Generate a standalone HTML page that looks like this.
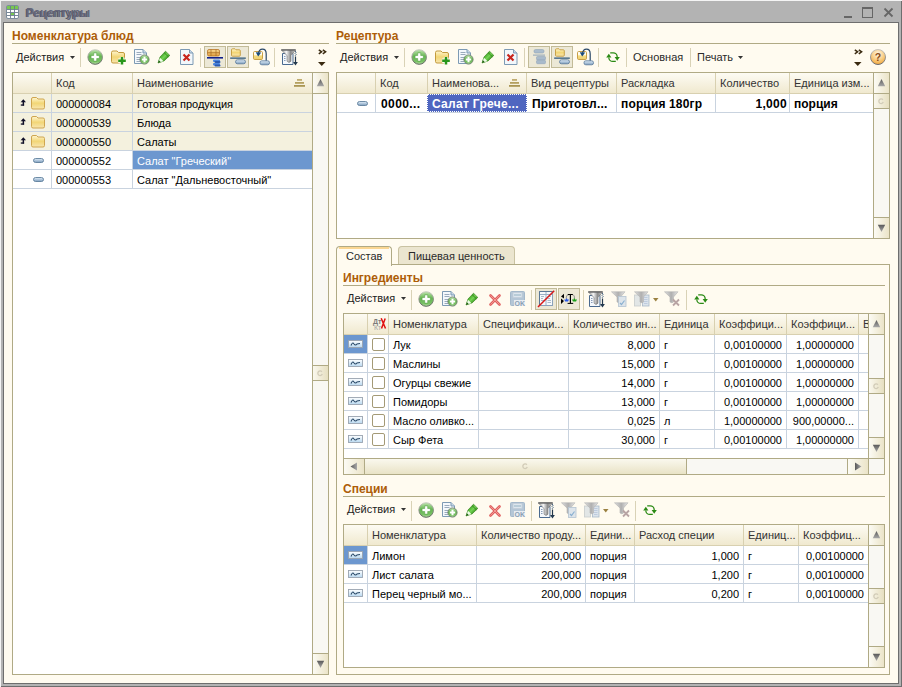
<!DOCTYPE html><html><head><meta charset="utf-8"><style>
html,body{margin:0;padding:0;width:902px;height:687px;overflow:hidden;background:#b3b3b3}
body>div,body>svg{position:absolute}
.t{white-space:nowrap;line-height:20px;font-family:"Liberation Sans",sans-serif}
svg{overflow:visible}
</style></head><body>
<svg width="0" height="0" style="position:absolute"><defs>
<linearGradient id="ghst" x1="0" y1="0" x2="0" y2="1"><stop offset="0" stop-color="#c8c4bc"/><stop offset="1" stop-color="#6a6a70"/></linearGradient>
<linearGradient id="gfold2" x1="0" y1="0" x2="0" y2="1"><stop offset="0" stop-color="#ffffff"/><stop offset="0.4" stop-color="#fffbe8"/><stop offset="0.55" stop-color="#f4dc80"/><stop offset="1" stop-color="#f0d070"/></linearGradient>
<linearGradient id="tri" x1="0" y1="0" x2="0" y2="1"><stop offset="0" stop-color="#5a5a5a"/><stop offset="1" stop-color="#a8a8a8"/></linearGradient>
<linearGradient id="trih" x1="0" y1="0" x2="1" y2="0"><stop offset="0" stop-color="#5a5a5a"/><stop offset="1" stop-color="#a8a8a8"/></linearGradient>
<linearGradient id="gpl" x1="0" y1="0" x2="0" y2="1"><stop offset="0" stop-color="#bfe4ae"/><stop offset="0.45" stop-color="#66b652"/><stop offset="0.8" stop-color="#78c064"/><stop offset="1" stop-color="#b4dca2"/></linearGradient><linearGradient id="gplst" x1="0" y1="0" x2="0" y2="1"><stop offset="0" stop-color="#c8ccc0"/><stop offset="1" stop-color="#5a625a"/></linearGradient>
<linearGradient id="gfold" x1="0" y1="0" x2="0" y2="1"><stop offset="0" stop-color="#fff6d0"/><stop offset="0.5" stop-color="#f2d676"/><stop offset="1" stop-color="#f8e6b0"/></linearGradient>
<linearGradient id="gpen" x1="0" y1="0" x2="1" y2="1"><stop offset="0.2" stop-color="#2e9014"/><stop offset="0.5" stop-color="#74d454"/><stop offset="0.8" stop-color="#22800c"/></linearGradient>
<linearGradient id="gorg" x1="0" y1="0" x2="0" y2="1"><stop offset="0" stop-color="#f8d890"/><stop offset="1" stop-color="#e0a040"/></linearGradient>
<linearGradient id="gbar" x1="0" y1="0" x2="0" y2="1"><stop offset="0" stop-color="#e4f0fa"/><stop offset="1" stop-color="#7c9cbc"/></linearGradient>
<linearGradient id="gfun" x1="0" y1="0" x2="1" y2="0"><stop offset="0" stop-color="#9a9a9a"/><stop offset="0.35" stop-color="#f4f4f4"/><stop offset="0.65" stop-color="#8a8a8a"/><stop offset="1" stop-color="#d0d0d0"/></linearGradient>
<linearGradient id="gfund" x1="0" y1="0" x2="1" y2="0"><stop offset="0" stop-color="#e0e0e0"/><stop offset="0.5" stop-color="#b0b0b0"/><stop offset="1" stop-color="#e8e8e8"/></linearGradient>
<radialGradient id="ghelp" cx="0.5" cy="0.3" r="0.75"><stop offset="0" stop-color="#fff8e8"/><stop offset="0.6" stop-color="#f8c878"/><stop offset="1" stop-color="#f0a030"/></radialGradient>
<linearGradient id="gwave" x1="0" y1="0" x2="0" y2="1"><stop offset="0" stop-color="#ffffff"/><stop offset="1" stop-color="#b8d8f0"/></linearGradient>
</defs></svg>
<div style="left:0px;top:0px;width:902px;height:687px;background:#b3b3b3;"></div>
<div style="left:0px;top:0px;width:902px;height:1px;background:#f4f4f4;"></div>
<div style="left:0px;top:0px;width:1px;height:687px;background:#f4f4f4;"></div>
<div style="left:901px;top:1px;width:1px;height:686px;background:#6e6e6e;"></div>
<div style="left:1px;top:686px;width:901px;height:1px;background:#6e6e6e;"></div>
<div style="left:3px;top:22px;width:896px;height:662px;background:#6e6e6e;"></div>
<div style="left:4px;top:23px;width:894px;height:660px;background:#fffbf0;"></div>
<div class="t" style="left:25px;top:3px;font-size:11.5px;font-weight:bold;color:#575967;">Рецептуры</div>
<svg style="left:6px;top:5px" width="13" height="14" viewBox="0 0 13 14"><rect x="0.5" y="0.5" width="12" height="13" rx="1.5" fill="#fff" stroke="#7c8c9c" stroke-width="1"/><rect x="1" y="1" width="11" height="3.2" fill="#78c850"/><path d="M4.5 1V13M8.5 1V13M1 4.5H12M1 7.5H12M1 10.5H12" stroke="#6a7a8c" stroke-width="0.9"/><rect x="5" y="8" width="3" height="2" fill="#78c850"/></svg>
<div class="t" style="left:26px;top:3px;font-size:12px;font-weight:bold;color:#65677a;letter-spacing:-0.2px">Рецептуры</div>
<div style="left:844px;top:16px;width:8px;height:2px;background:#666;"></div>
<div style="left:862px;top:7px;width:11px;height:11px;background:transparent;box-sizing:border-box;border:1px solid #666;border-top-width:2px"></div>
<svg style="left:883px;top:7px" width="11" height="11" viewBox="0 0 11 11"><path d="M1.5 1.5L9.5 9.5M9.5 1.5L1.5 9.5" stroke="#666" stroke-width="1.8"/></svg>
<div class="t" style="left:12px;top:26px;font-size:12px;font-weight:bold;color:#ad5d08;">Номенклатура блюд</div>
<div style="left:12px;top:43px;width:317px;height:1px;background:#b0aa85;"></div>
<div class="t" style="left:16px;top:47px;font-size:11px;font-weight:normal;color:#222;">Действия</div>
<svg style="left:70px;top:56px" width="5" height="3" viewBox="0 0 5 3"><path d="M0 0H5L2.5 3Z" fill="#333"/></svg>
<div style="left:80px;top:48px;width:1px;height:19px;background:#d9d2b6;"></div>
<svg style="left:87px;top:49px" width="16" height="16" viewBox="0 0 16 16"><circle cx="8.2" cy="8" r="7.3" fill="url(#gpl)" stroke="url(#gplst)" stroke-width="1"/><path d="M6.7 3.9H9.7V6.5H12.3V9.5H9.7V12.1H6.7V9.5H4.1V6.5H6.7Z" fill="#fff" stroke="#4a9a38" stroke-width="0.5"/></svg>
<svg style="left:110px;top:49px" width="17" height="17" viewBox="0 0 17 17"><path d="M1.5 3.5 Q1.5 2 3 2 H7 L8.5 3.5 H13 Q14.5 3.5 14.5 5 V12.5 Q14.5 14 13 14 H3 Q1.5 14 1.5 12.5Z" fill="url(#gfold)" stroke="#c39a3c" stroke-width="1"/><path d="M8.2 11.7H15.8M12 7.9V15.5" stroke="#fffbf0" stroke-width="4.4"/><path d="M8.2 11.7H15.8M12 7.9V15.5" stroke="#28961a" stroke-width="2.5"/></svg>
<svg style="left:134px;top:49px" width="17" height="17" viewBox="0 0 17 17"><path d="M0.5 0.5H9L12.5 4V14.5H0.5Z" fill="#f4f8fc" stroke="#7d9ab4"/><path d="M9 0.5V4H12.5" fill="#c8d8e8" stroke="#7d9ab4"/><path d="M2.5 3.5H7.5M2.5 5.5H7.5M2.5 8.5H7M2.5 10.5H6M2.5 12.5H6" stroke="#9aaabc" stroke-width="1"/><circle cx="10.5" cy="10.5" r="4.6" fill="url(#gpl)" stroke="#6f7f6c" stroke-width="0.9"/><path d="M7.8 10.5H13.2M10.5 7.8V13.2" stroke="#fff" stroke-width="2"/></svg>
<svg style="left:155px;top:47px" width="16" height="16" viewBox="0 0 16 16"><path d="M3 16 L5 10 L10.5 4.2 L14.8 8.4 L9 14Z" fill="url(#gpen)" stroke="#2a7a12" stroke-width="0.6"/><path d="M9.1 5.6L13.4 9.8" stroke="#2a7a12" stroke-width="0.8"/><path d="M3.4 15.6 L5 10.8 L8.6 14.2Z" fill="#eefde8"/><path d="M3 16 L3.9 13.3 L5.7 15.1Z" fill="#1c5a0c"/></svg>
<svg style="left:180px;top:49px" width="14" height="17" viewBox="0 0 14 17"><path d="M0.5 0.5H9.5L13 4V15.5H0.5Z" fill="#f2f7fb" stroke="#7d9ab4"/><path d="M9.5 0.5V4H13" fill="#c8d8e8" stroke="#7d9ab4"/><path d="M3.5 5.5L9.5 11.5M9.5 5.5L3.5 11.5" stroke="#c8241c" stroke-width="2.2"/></svg>
<div style="left:200px;top:48px;width:1px;height:19px;background:#d9d2b6;"></div>
<div style="left:204px;top:46px;width:22px;height:22px;background:#ece8d6;box-sizing:border-box;border:1px solid #c2bb98"></div>
<svg style="left:207px;top:49px" width="17" height="18" viewBox="0 0 17 18"><rect x="0.5" y="0.5" width="12" height="6.5" rx="1.5" fill="url(#gorg)" stroke="#b8762a" stroke-width="0.8"/><path d="M4 0.5V7M9 0.5V7M0.5 3.7H12.5" stroke="#a86a20" stroke-width="0.7"/><rect x="0" y="8" width="16" height="1.6" fill="#10208a"/><rect x="6" y="10.5" width="7" height="2.4" rx="1" fill="#4a86e0"/><rect x="7.5" y="12" width="6" height="2" rx="1" fill="#2a5ab0"/><rect x="6" y="14" width="7" height="2.4" rx="1" fill="#4a86e0"/><rect x="7.5" y="15.5" width="6" height="2" rx="1" fill="#2a5ab0"/></svg>
<div style="left:227px;top:46px;width:22px;height:22px;background:#ece8d6;box-sizing:border-box;border:1px solid #c2bb98"></div>
<svg style="left:230px;top:48px" width="17" height="18" viewBox="0 0 17 18"><path d="M1.5 1.8 Q1.5 0.8 2.5 0.8H5L6 1.8H9.3Q10.3 1.8 10.3 2.8V7.2Q10.3 8.2 9.3 8.2H2.5Q1.5 8.2 1.5 7.2Z" fill="url(#gfold)" stroke="#c39a3c" stroke-width="0.9"/><rect x="0" y="9.4" width="16" height="1.3" rx="0.6" fill="#2a5478"/><rect x="5.5" y="11.8" width="10" height="4" rx="2" fill="url(#gbar)" stroke="#58789a" stroke-width="0.8"/></svg>
<svg style="left:252px;top:48px" width="17" height="17" viewBox="0 0 17 17"><rect x="1.5" y="3.5" width="9" height="8" rx="1.2" fill="url(#gfold2)" stroke="#c9a048" stroke-width="1"/><path d="M6.5 5.5 Q7 1.2 10.5 1.2 Q14.2 1.2 14.2 6 V13.5" fill="none" stroke="#2a4868" stroke-width="1.2"/><path d="M3.8 4.2 L9.2 4.6 L6.2 8.4Z" fill="#1a4a7a"/><rect x="8" y="12.8" width="9.5" height="4" rx="1.8" fill="url(#gbar)" stroke="#58789a" stroke-width="0.8"/></svg>
<div style="left:274px;top:48px;width:1px;height:19px;background:#d9d2b6;"></div>
<svg style="left:281px;top:48px" width="17" height="18" viewBox="0 0 17 18"><path d="M1.5 5.5H12V16.5H1.5Z" fill="#f4f8fc" stroke="#4a6a90" stroke-width="1"/><path d="M3 8.5H4.5M3 10.5H4.5M3 12.5H4.5" stroke="#8a9cb8"/><path d="M0.3 2H14.7L9.9 7.6V13.2Q8 15.6 6.1 13.2V7.6Z" fill="url(#gfun)" stroke="#7a7a7a" stroke-width="0.7"/><path d="M0.3 1.9H14.7" stroke="#5a5a5a" stroke-width="1.2"/><path d="M14.5 8.5V15" stroke="#22384e" stroke-width="1.2"/><path d="M12.1 14H16.9L14.5 17.6Z" fill="#22384e"/><path d="M14 3L15.2 4.2L14 5.4L15.2 6.6L14 7.8" stroke="#3a5878" stroke-width="0.9" fill="none"/></svg>
<svg style="left:318px;top:49px" width="10" height="18" viewBox="0 0 10 18"><path d="M0.8 0.8L3.6 2.8L0.8 4.8M4.8 0.8L7.6 2.8L4.8 4.8" fill="none" stroke="#3a2a10" stroke-width="1.5"/><path d="M0 13H7.5L3.75 17Z" fill="#3a2a10"/></svg>
<div style="left:12px;top:72px;width:317px;height:603px;background:#b0aa85;"></div>
<div style="left:13px;top:73px;width:315px;height:601px;background:#fff;"></div>
<div style="left:13px;top:73px;width:315px;height:20px;background:linear-gradient(#fdfbf3,#f0e9cf);"></div>
<div style="left:13px;top:93px;width:315px;height:1px;background:#d8d0b0;"></div>
<div style="left:13px;top:94px;width:299px;height:18px;background:#f4f1de;"></div>
<div style="left:13px;top:113px;width:299px;height:18px;background:#f4f1de;"></div>
<div style="left:13px;top:132px;width:299px;height:18px;background:#f4f1de;"></div>
<div style="left:133px;top:151px;width:179px;height:18px;background:#6c97cf;"></div>
<div style="left:51px;top:73px;width:1px;height:20px;background:#d8d0b0;"></div>
<div style="left:51px;top:94px;width:1px;height:95px;background:#c9d3df;"></div>
<div style="left:132px;top:73px;width:1px;height:20px;background:#d8d0b0;"></div>
<div style="left:132px;top:94px;width:1px;height:95px;background:#c9d3df;"></div>
<div style="left:13px;top:112px;width:299px;height:1px;background:#c9d3df;"></div>
<div style="left:13px;top:131px;width:299px;height:1px;background:#c9d3df;"></div>
<div style="left:13px;top:150px;width:299px;height:1px;background:#c9d3df;"></div>
<div style="left:13px;top:169px;width:299px;height:1px;background:#c9d3df;"></div>
<div style="left:13px;top:188px;width:299px;height:1px;background:#c9d3df;"></div>
<div class="t" style="left:56px;top:73px;font-size:11px;font-weight:normal;color:#333;">Код</div>
<div class="t" style="left:137px;top:73px;font-size:11px;font-weight:normal;color:#333;">Наименование</div>
<svg style="left:294px;top:78px" width="13" height="9" viewBox="0 0 13 9"><rect x="3" y="1" width="5" height="1.8" fill="#c0ac70"/><rect x="1" y="4" width="9" height="1.8" fill="#b4a060"/><rect x="0" y="7" width="11" height="1.8" fill="#aa9654"/></svg>
<div class="t" style="left:56px;top:94px;font-size:11px;font-weight:normal;color:#000;">000000084</div>
<div class="t" style="left:137px;top:94px;font-size:11px;font-weight:normal;color:#000;">Готовая продукция</div>
<svg style="left:20px;top:99px" width="7" height="7" viewBox="0 0 7 7"><path d="M0.6 3.2 L3.3 0.2 L6 3.2Z" fill="#101028"/><rect x="2.6" y="2.6" width="1.5" height="4" fill="#101028"/><rect x="0.8" y="5.4" width="3.3" height="1.3" fill="#101028"/></svg>
<svg style="left:31px;top:97px" width="14" height="13" viewBox="0 0 14 13"><path d="M0.5 2 Q0.5 0.5 2 0.5H5.5L7 2H12Q13.5 2 13.5 3.5V10.5Q13.5 12 12 12H2Q0.5 12 0.5 10.5Z" fill="url(#gfold)" stroke="#cfa650" stroke-width="1"/></svg>
<div class="t" style="left:56px;top:113px;font-size:11px;font-weight:normal;color:#000;">000000539</div>
<div class="t" style="left:137px;top:113px;font-size:11px;font-weight:normal;color:#000;">Блюда</div>
<svg style="left:20px;top:118px" width="7" height="7" viewBox="0 0 7 7"><path d="M0.6 3.2 L3.3 0.2 L6 3.2Z" fill="#101028"/><rect x="2.6" y="2.6" width="1.5" height="4" fill="#101028"/><rect x="0.8" y="5.4" width="3.3" height="1.3" fill="#101028"/></svg>
<svg style="left:31px;top:116px" width="14" height="13" viewBox="0 0 14 13"><path d="M0.5 2 Q0.5 0.5 2 0.5H5.5L7 2H12Q13.5 2 13.5 3.5V10.5Q13.5 12 12 12H2Q0.5 12 0.5 10.5Z" fill="url(#gfold)" stroke="#cfa650" stroke-width="1"/></svg>
<div class="t" style="left:56px;top:132px;font-size:11px;font-weight:normal;color:#000;">000000550</div>
<div class="t" style="left:137px;top:132px;font-size:11px;font-weight:normal;color:#000;">Салаты</div>
<svg style="left:20px;top:137px" width="7" height="7" viewBox="0 0 7 7"><path d="M0.6 3.2 L3.3 0.2 L6 3.2Z" fill="#101028"/><rect x="2.6" y="2.6" width="1.5" height="4" fill="#101028"/><rect x="0.8" y="5.4" width="3.3" height="1.3" fill="#101028"/></svg>
<svg style="left:31px;top:135px" width="14" height="13" viewBox="0 0 14 13"><path d="M0.5 2 Q0.5 0.5 2 0.5H5.5L7 2H12Q13.5 2 13.5 3.5V10.5Q13.5 12 12 12H2Q0.5 12 0.5 10.5Z" fill="url(#gfold)" stroke="#cfa650" stroke-width="1"/></svg>
<div class="t" style="left:56px;top:151px;font-size:11px;font-weight:normal;color:#000;">000000552</div>
<div class="t" style="left:137px;top:151px;font-size:11px;font-weight:normal;color:#fff;">Салат "Греческий"</div>
<svg style="left:33px;top:158px" width="11" height="5" viewBox="0 0 11 5"><rect x="0.5" y="0.5" width="10" height="4" rx="2" fill="url(#gbar)" stroke="#5f7f9c" stroke-width="0.9"/></svg>
<div class="t" style="left:56px;top:170px;font-size:11px;font-weight:normal;color:#000;">000000553</div>
<div class="t" style="left:137px;top:170px;font-size:11px;font-weight:normal;color:#000;">Салат "Дальневосточный"</div>
<svg style="left:33px;top:177px" width="11" height="5" viewBox="0 0 11 5"><rect x="0.5" y="0.5" width="10" height="4" rx="2" fill="url(#gbar)" stroke="#5f7f9c" stroke-width="0.9"/></svg>
<div style="left:313px;top:73px;width:15px;height:601px;background:#f9f8f3;"></div>
<div style="left:312px;top:72px;width:1px;height:603px;background:#b0aa85;"></div>
<div style="left:313px;top:73px;width:15px;height:20px;background:linear-gradient(90deg,#fcfbf4,#ebe4c8);"></div>
<svg style="left:313px;top:73px" width="15" height="20" viewBox="0 0 15 20"><path d="M3.8 13.2L7.5 6.0L11.2 13.2Z" fill="url(#tri)"/></svg>
<div style="left:312px;top:93px;width:17px;height:1px;background:#b0aa85;"></div>
<div style="left:313px;top:654px;width:15px;height:20px;background:linear-gradient(90deg,#fcfbf4,#ebe4c8);"></div>
<svg style="left:313px;top:654px" width="15" height="20" viewBox="0 0 15 20"><path d="M3.8 6.8L7.5 14.0L11.2 6.8Z" fill="url(#tri)"/></svg>
<div style="left:312px;top:653px;width:17px;height:1px;background:#b0aa85;"></div>
<div style="left:313px;top:366px;width:15px;height:14px;background:linear-gradient(90deg,#faf8ee,#e6dfc0);"></div>
<svg style="left:316px;top:369px" width="8" height="8" viewBox="0 0 8 8"><path d="M5.9 2.7 A2.3 2.3 0 1 0 6.3 5.1" fill="none" stroke="#d2ccb8" stroke-width="1.3"/></svg>
<div style="left:312px;top:365px;width:17px;height:1px;background:#b0aa85;"></div>
<div style="left:312px;top:380px;width:17px;height:1px;background:#b0aa85;"></div>
<div class="t" style="left:336px;top:26px;font-size:12px;font-weight:bold;color:#ad5d08;">Рецептура</div>
<div style="left:336px;top:43px;width:554px;height:1px;background:#b0aa85;"></div>
<div class="t" style="left:340px;top:47px;font-size:11px;font-weight:normal;color:#222;">Действия</div>
<svg style="left:394px;top:56px" width="5" height="3" viewBox="0 0 5 3"><path d="M0 0H5L2.5 3Z" fill="#333"/></svg>
<div style="left:404px;top:48px;width:1px;height:19px;background:#d9d2b6;"></div>
<svg style="left:411px;top:49px" width="16" height="16" viewBox="0 0 16 16"><circle cx="8.2" cy="8" r="7.3" fill="url(#gpl)" stroke="url(#gplst)" stroke-width="1"/><path d="M6.7 3.9H9.7V6.5H12.3V9.5H9.7V12.1H6.7V9.5H4.1V6.5H6.7Z" fill="#fff" stroke="#4a9a38" stroke-width="0.5"/></svg>
<svg style="left:434px;top:49px" width="17" height="17" viewBox="0 0 17 17"><path d="M1.5 3.5 Q1.5 2 3 2 H7 L8.5 3.5 H13 Q14.5 3.5 14.5 5 V12.5 Q14.5 14 13 14 H3 Q1.5 14 1.5 12.5Z" fill="url(#gfold)" stroke="#c39a3c" stroke-width="1"/><path d="M8.2 11.7H15.8M12 7.9V15.5" stroke="#fffbf0" stroke-width="4.4"/><path d="M8.2 11.7H15.8M12 7.9V15.5" stroke="#28961a" stroke-width="2.5"/></svg>
<svg style="left:458px;top:49px" width="17" height="17" viewBox="0 0 17 17"><path d="M0.5 0.5H9L12.5 4V14.5H0.5Z" fill="#f4f8fc" stroke="#7d9ab4"/><path d="M9 0.5V4H12.5" fill="#c8d8e8" stroke="#7d9ab4"/><path d="M2.5 3.5H7.5M2.5 5.5H7.5M2.5 8.5H7M2.5 10.5H6M2.5 12.5H6" stroke="#9aaabc" stroke-width="1"/><circle cx="10.5" cy="10.5" r="4.6" fill="url(#gpl)" stroke="#6f7f6c" stroke-width="0.9"/><path d="M7.8 10.5H13.2M10.5 7.8V13.2" stroke="#fff" stroke-width="2"/></svg>
<svg style="left:479px;top:47px" width="16" height="16" viewBox="0 0 16 16"><path d="M3 16 L5 10 L10.5 4.2 L14.8 8.4 L9 14Z" fill="url(#gpen)" stroke="#2a7a12" stroke-width="0.6"/><path d="M9.1 5.6L13.4 9.8" stroke="#2a7a12" stroke-width="0.8"/><path d="M3.4 15.6 L5 10.8 L8.6 14.2Z" fill="#eefde8"/><path d="M3 16 L3.9 13.3 L5.7 15.1Z" fill="#1c5a0c"/></svg>
<svg style="left:504px;top:49px" width="14" height="17" viewBox="0 0 14 17"><path d="M0.5 0.5H9.5L13 4V15.5H0.5Z" fill="#f2f7fb" stroke="#7d9ab4"/><path d="M9.5 0.5V4H13" fill="#c8d8e8" stroke="#7d9ab4"/><path d="M3.5 5.5L9.5 11.5M9.5 5.5L3.5 11.5" stroke="#c8241c" stroke-width="2.2"/></svg>
<div style="left:524px;top:48px;width:1px;height:19px;background:#d9d2b6;"></div>
<div style="left:528px;top:46px;width:22px;height:22px;background:#ece8d6;box-sizing:border-box;border:1px solid #c2bb98"></div>
<svg style="left:529px;top:49px" width="17" height="18" viewBox="0 0 17 18"><rect x="5" y="0.5" width="10" height="3.5" rx="1.5" fill="#aabccc" stroke="#90a4b8" stroke-width="0.6"/><rect x="4" y="5.6" width="12" height="1" fill="#8ea4b8"/><rect x="7.5" y="7.5" width="9" height="3.4" rx="1" fill="#a8bacb" stroke="#90a4b8" stroke-width="0.6"/><rect x="7.5" y="11.3" width="9" height="3.4" rx="1" fill="#a8bacb" stroke="#90a4b8" stroke-width="0.6"/></svg>
<div style="left:551px;top:46px;width:22px;height:22px;background:#ece8d6;box-sizing:border-box;border:1px solid #c2bb98"></div>
<svg style="left:554px;top:48px" width="17" height="18" viewBox="0 0 17 18"><path d="M1.5 1.8 Q1.5 0.8 2.5 0.8H5L6 1.8H9.3Q10.3 1.8 10.3 2.8V7.2Q10.3 8.2 9.3 8.2H2.5Q1.5 8.2 1.5 7.2Z" fill="url(#gfold)" stroke="#c39a3c" stroke-width="0.9"/><rect x="0" y="9.4" width="16" height="1.3" rx="0.6" fill="#2a5478"/><rect x="5.5" y="11.8" width="10" height="4" rx="2" fill="url(#gbar)" stroke="#58789a" stroke-width="0.8"/></svg>
<svg style="left:576px;top:48px" width="17" height="17" viewBox="0 0 17 17"><rect x="1.5" y="3.5" width="9" height="8" rx="1.2" fill="url(#gfold2)" stroke="#c9a048" stroke-width="1"/><path d="M6.5 5.5 Q7 1.2 10.5 1.2 Q14.2 1.2 14.2 6 V13.5" fill="none" stroke="#2a4868" stroke-width="1.2"/><path d="M3.8 4.2 L9.2 4.6 L6.2 8.4Z" fill="#1a4a7a"/><rect x="8" y="12.8" width="9.5" height="4" rx="1.8" fill="url(#gbar)" stroke="#58789a" stroke-width="0.8"/></svg>
<div style="left:598px;top:48px;width:1px;height:19px;background:#d9d2b6;"></div>
<svg style="left:606px;top:52px" width="15" height="11" viewBox="0 0 15 11"><path d="M4.2 0.9 H7.2 A4 4 0 0 1 11.2 4.9" fill="none" stroke="#2a8a14" stroke-width="1.3"/><path d="M8.6 5H13.8L11.2 8.8Z" fill="#2a8a14"/><path d="M9.8 9.4 H6.8 A4 4 0 0 1 2.8 5.4" fill="none" stroke="#2a8a14" stroke-width="1.3"/><path d="M0.2 5.4H5.4L2.8 1.8Z" fill="#2a8a14"/></svg>
<div style="left:626px;top:48px;width:1px;height:19px;background:#d9d2b6;"></div>
<div class="t" style="left:633px;top:47px;font-size:11px;font-weight:normal;color:#2a2a2a;">Основная</div>
<div style="left:690px;top:48px;width:1px;height:19px;background:#d9d2b6;"></div>
<div class="t" style="left:697px;top:47px;font-size:11px;font-weight:normal;color:#2a2a2a;">Печать</div>
<svg style="left:738px;top:56px" width="5" height="3" viewBox="0 0 5 3"><path d="M0 0H5L2.5 3Z" fill="#333"/></svg>
<svg style="left:854px;top:49px" width="10" height="18" viewBox="0 0 10 18"><path d="M0.8 0.8L3.6 2.8L0.8 4.8M4.8 0.8L7.6 2.8L4.8 4.8" fill="none" stroke="#3a2a10" stroke-width="1.5"/><path d="M0 13H7.5L3.75 17Z" fill="#3a2a10"/></svg>
<svg style="left:869px;top:48px" width="18" height="18" viewBox="0 0 18 18"><circle cx="9" cy="9" r="7.5" fill="url(#ghelp)" stroke="url(#ghst)" stroke-width="1"/><text x="9" y="12.8" text-anchor="middle" font-family="Liberation Sans" font-weight="bold" font-size="10.5" fill="#8a4c18">?</text></svg>
<div style="left:336px;top:72px;width:554px;height:167px;background:#b0aa85;"></div>
<div style="left:337px;top:73px;width:552px;height:165px;background:#fff;"></div>
<div style="left:337px;top:73px;width:552px;height:20px;background:linear-gradient(#fdfbf3,#f0e9cf);"></div>
<div style="left:337px;top:93px;width:552px;height:1px;background:#d8d0b0;"></div>
<div style="left:375px;top:73px;width:1px;height:20px;background:#d8d0b0;"></div>
<div style="left:375px;top:94px;width:1px;height:18px;background:#c9d3df;"></div>
<div style="left:427px;top:73px;width:1px;height:20px;background:#d8d0b0;"></div>
<div style="left:427px;top:94px;width:1px;height:18px;background:#c9d3df;"></div>
<div style="left:526px;top:73px;width:1px;height:20px;background:#d8d0b0;"></div>
<div style="left:526px;top:94px;width:1px;height:18px;background:#c9d3df;"></div>
<div style="left:616px;top:73px;width:1px;height:20px;background:#d8d0b0;"></div>
<div style="left:616px;top:94px;width:1px;height:18px;background:#c9d3df;"></div>
<div style="left:715px;top:73px;width:1px;height:20px;background:#d8d0b0;"></div>
<div style="left:715px;top:94px;width:1px;height:18px;background:#c9d3df;"></div>
<div style="left:789px;top:73px;width:1px;height:20px;background:#d8d0b0;"></div>
<div style="left:789px;top:94px;width:1px;height:18px;background:#c9d3df;"></div>
<div style="left:337px;top:112px;width:536px;height:1px;background:#c9d3df;"></div>
<div class="t" style="left:380px;top:73px;font-size:11px;font-weight:normal;color:#333;">Код</div>
<div class="t" style="left:432px;top:73px;font-size:11px;font-weight:normal;color:#333;">Наименова...</div>
<div class="t" style="left:531px;top:73px;font-size:11px;font-weight:normal;color:#333;">Вид рецептуры</div>
<div class="t" style="left:621px;top:73px;font-size:11px;font-weight:normal;color:#333;">Раскладка</div>
<div class="t" style="left:720px;top:73px;font-size:11px;font-weight:normal;color:#333;">Количество</div>
<div class="t" style="left:794px;top:73px;font-size:11px;font-weight:normal;color:#333;">Единица изм...</div>
<svg style="left:509px;top:78px" width="13" height="9" viewBox="0 0 13 9"><rect x="3" y="1" width="5" height="1.8" fill="#c0ac70"/><rect x="1" y="4" width="9" height="1.8" fill="#b4a060"/><rect x="0" y="7" width="11" height="1.8" fill="#aa9654"/></svg>
<div style="left:427px;top:94px;width:100px;height:18px;background:#4f66c0;box-sizing:border-box;border:1px dotted #fff"></div>
<svg style="left:357px;top:101px" width="11" height="5" viewBox="0 0 11 5"><rect x="0.5" y="0.5" width="10" height="4" rx="2" fill="url(#gbar)" stroke="#5f7f9c" stroke-width="0.9"/></svg>
<div class="t" style="left:381px;top:94px;font-size:12px;font-weight:bold;color:#000;letter-spacing:0.4px">0000...</div>
<div class="t" style="left:432px;top:94px;font-size:12px;font-weight:bold;color:#fff;letter-spacing:0.3px">Салат Грече...</div>
<div class="t" style="left:532px;top:94px;font-size:12px;font-weight:bold;color:#000;letter-spacing:0.2px">Приготовл...</div>
<div class="t" style="left:621px;top:94px;font-size:12px;font-weight:bold;color:#000;letter-spacing:0.15px">порция 180гр</div>
<div class="t" style="left:487px;width:300px;text-align:right;top:94px;font-size:12px;font-weight:bold;color:#000;letter-spacing:0.3px">1,000</div>
<div class="t" style="left:794px;top:94px;font-size:12px;font-weight:bold;color:#000;">порция</div>
<div style="left:874px;top:73px;width:15px;height:165px;background:#f9f8f3;"></div>
<div style="left:873px;top:72px;width:1px;height:167px;background:#b0aa85;"></div>
<div style="left:874px;top:73px;width:15px;height:20px;background:linear-gradient(90deg,#fcfbf4,#ebe4c8);"></div>
<svg style="left:874px;top:73px" width="15" height="20" viewBox="0 0 15 20"><path d="M3.8 13.2L7.5 6.0L11.2 13.2Z" fill="url(#tri)"/></svg>
<div style="left:873px;top:93px;width:17px;height:1px;background:#b0aa85;"></div>
<div style="left:874px;top:218px;width:15px;height:20px;background:linear-gradient(90deg,#fcfbf4,#ebe4c8);"></div>
<svg style="left:874px;top:218px" width="15" height="20" viewBox="0 0 15 20"><path d="M3.8 6.8L7.5 14.0L11.2 6.8Z" fill="url(#tri)"/></svg>
<div style="left:873px;top:217px;width:17px;height:1px;background:#b0aa85;"></div>
<div style="left:874px;top:94px;width:15px;height:14px;background:linear-gradient(90deg,#faf8ee,#e6dfc0);"></div>
<svg style="left:877px;top:97px" width="8" height="8" viewBox="0 0 8 8"><path d="M5.9 2.7 A2.3 2.3 0 1 0 6.3 5.1" fill="none" stroke="#d2ccb8" stroke-width="1.3"/></svg>
<div style="left:873px;top:93px;width:17px;height:1px;background:#b0aa85;"></div>
<div style="left:873px;top:108px;width:17px;height:1px;background:#b0aa85;"></div>
<div style="left:336px;top:264px;width:554px;height:411px;background:#b0aa85;"></div>
<div style="left:337px;top:265px;width:552px;height:409px;background:#fffbf0;"></div>
<div style="left:398px;top:246px;width:117px;height:19px;box-sizing:border-box;border:1px solid #c9c2a2;border-bottom:none;border-radius:4px 4px 0 0;background:#ebe5cf"></div>
<div style="left:398px;top:264px;width:117px;height:1px;background:#b0aa85;"></div>
<div style="left:336px;top:246px;width:56px;height:20px;box-sizing:border-box;border:1px solid #b0aa85;border-bottom:none;border-radius:4px 4px 0 0;background:#fffbf0"></div>
<div style="left:339px;top:247px;width:50px;height:2px;background:#fad692;"></div>
<div class="t" style="left:346px;top:246px;font-size:11px;font-weight:normal;color:#2a2a2a;">Состав</div>
<div class="t" style="left:408px;top:246px;font-size:11px;font-weight:normal;color:#2a2a2a;">Пищевая ценность</div>
<div class="t" style="left:343px;top:268px;font-size:12px;font-weight:bold;color:#ad5d08;">Ингредиенты</div>
<div style="left:343px;top:285px;width:542px;height:1px;background:#b0aa85;"></div>
<div class="t" style="left:347px;top:288px;font-size:11px;font-weight:normal;color:#222;">Действия</div>
<svg style="left:401px;top:297px" width="5" height="3" viewBox="0 0 5 3"><path d="M0 0H5L2.5 3Z" fill="#333"/></svg>
<div style="left:411px;top:290px;width:1px;height:20px;background:#d9d2b6;"></div>
<svg style="left:418px;top:291px" width="16" height="16" viewBox="0 0 16 16"><circle cx="8.2" cy="8" r="7.3" fill="url(#gpl)" stroke="url(#gplst)" stroke-width="1"/><path d="M6.7 3.9H9.7V6.5H12.3V9.5H9.7V12.1H6.7V9.5H4.1V6.5H6.7Z" fill="#fff" stroke="#4a9a38" stroke-width="0.5"/></svg>
<svg style="left:442px;top:291px" width="17" height="17" viewBox="0 0 17 17"><path d="M0.5 0.5H9L12.5 4V14.5H0.5Z" fill="#f4f8fc" stroke="#7d9ab4"/><path d="M9 0.5V4H12.5" fill="#c8d8e8" stroke="#7d9ab4"/><path d="M2.5 3.5H7.5M2.5 5.5H7.5M2.5 8.5H7M2.5 10.5H6M2.5 12.5H6" stroke="#9aaabc" stroke-width="1"/><circle cx="10.5" cy="10.5" r="4.6" fill="url(#gpl)" stroke="#6f7f6c" stroke-width="0.9"/><path d="M7.8 10.5H13.2M10.5 7.8V13.2" stroke="#fff" stroke-width="2"/></svg>
<svg style="left:463px;top:289px" width="16" height="16" viewBox="0 0 16 16"><path d="M3 16 L5 10 L10.5 4.2 L14.8 8.4 L9 14Z" fill="url(#gpen)" stroke="#2a7a12" stroke-width="0.6"/><path d="M9.1 5.6L13.4 9.8" stroke="#2a7a12" stroke-width="0.8"/><path d="M3.4 15.6 L5 10.8 L8.6 14.2Z" fill="#eefde8"/><path d="M3 16 L3.9 13.3 L5.7 15.1Z" fill="#1c5a0c"/></svg>
<svg style="left:489px;top:294px" width="12" height="12" viewBox="0 0 12 12"><path d="M1.5 1.5L10.5 10.5M10.5 1.5L1.5 10.5" stroke="#e06060" stroke-width="2.6" stroke-linecap="round"/><path d="M1.5 1.5L10.5 10.5M10.5 1.5L1.5 10.5" stroke="#f4a8a0" stroke-width="0.8"/></svg>
<svg style="left:510px;top:291px" width="16" height="16" viewBox="0 0 16 16"><rect x="0.5" y="0.5" width="14" height="14" rx="1" fill="#b4c6d6" stroke="#a4b8ca"/><rect x="3" y="1.5" width="9" height="5" fill="#dde6ee" stroke="#c0ccd8" stroke-width="0.8"/><rect x="4" y="3" width="7" height="2" fill="#b8ccd8"/><rect x="4" y="9" width="11" height="6" fill="#e8edf2"/><text x="4.6" y="15" font-family="Liberation Sans" font-weight="bold" font-size="7" fill="#8aa0b4">OK</text></svg>
<div style="left:531px;top:290px;width:1px;height:20px;background:#d9d2b6;"></div>
<div style="left:535px;top:288px;width:22px;height:22px;background:#ece8d6;box-sizing:border-box;border:1px solid #c2bb98"></div>
<svg style="left:537px;top:290px" width="18" height="18" viewBox="0 0 18 18"><rect x="2.5" y="1.5" width="13" height="14" fill="#f6f9fc" stroke="#8aa2ba" stroke-width="1"/><path d="M2.5 15.5V1.5H15.5" fill="none" stroke="#5a7896" stroke-width="1"/><path d="M3 4.5H15M9 2V15" stroke="#9ab0c6" stroke-width="1"/><path d="M4 6.5H7M4 8.5H6M4 10.5H7M10.5 6.5H14M10.5 8.5H13M10.5 10.5H14M10.5 12.5H14" stroke="#a0b2c4" stroke-width="0.9"/><path d="M1 17 L17.2 0.8" stroke="#d81818" stroke-width="1.5"/></svg>
<div style="left:558px;top:288px;width:22px;height:22px;background:#ece8d6;box-sizing:border-box;border:1px solid #c2bb98"></div>
<svg style="left:558px;top:288px" width="22" height="22" viewBox="0 0 22 22"><path d="M6 5.8 L3 8.4 L6 10.6Z M3 10.6 L6 12.9 L3 16Z" fill="#000"/><path d="M8.3 10.8 V9 Q8.3 6.4 12.3 6.4 Q16.4 6.4 16.4 9 V10.8" fill="none" stroke="#8a8a8a" stroke-width="0.9"/><path d="M12.4 6.4V15.4" stroke="#000" stroke-width="1.2"/><path d="M9.8 6.5H14.8M9.6 15.4H15.2" stroke="#000" stroke-width="1"/><path d="M6.2 11.6H11L10 13.6H7.2Z" fill="#2a5ae8"/><path d="M8.6 10.6V12" stroke="#2a5ae8" stroke-width="1.2"/><path d="M13.9 11.6H19L18 13.6H15Z" fill="#18a018"/><path d="M16.4 10.6V12" stroke="#18a018" stroke-width="1.2"/></svg>
<div style="left:583px;top:290px;width:1px;height:20px;background:#d9d2b6;"></div>
<svg style="left:588px;top:290px" width="17" height="18" viewBox="0 0 17 18"><path d="M1.5 5.5H12V16.5H1.5Z" fill="#f4f8fc" stroke="#4a6a90" stroke-width="1"/><path d="M3 8.5H4.5M3 10.5H4.5M3 12.5H4.5" stroke="#8a9cb8"/><path d="M0.3 2H14.7L9.9 7.6V13.2Q8 15.6 6.1 13.2V7.6Z" fill="url(#gfun)" stroke="#7a7a7a" stroke-width="0.7"/><path d="M0.3 1.9H14.7" stroke="#5a5a5a" stroke-width="1.2"/><path d="M14.5 8.5V15" stroke="#22384e" stroke-width="1.2"/><path d="M12.1 14H16.9L14.5 17.6Z" fill="#22384e"/><path d="M14 3L15.2 4.2L14 5.4L15.2 6.6L14 7.8" stroke="#3a5878" stroke-width="0.9" fill="none"/></svg>
<svg style="left:611px;top:291px" width="16" height="17" viewBox="0 0 16 17"><path d="M0.5 0.8H14L9.5 6V11Q8 12.5 6 11V6Z" fill="url(#gfund)" stroke="#b0b0b0" stroke-width="0.6"/><rect x="7.5" y="5.5" width="7.5" height="10" fill="#dde4ea" stroke="#b4c4d2" stroke-width="0.8"/><path d="M9 12L10.5 13.5L13.5 9.5" stroke="#8ab0d0" stroke-width="1.2" fill="none"/></svg>
<svg style="left:634px;top:291px" width="16" height="17" viewBox="0 0 16 17"><rect x="0.5" y="4" width="6" height="11" fill="#e2e6e6" stroke="#c8cccc" stroke-width="0.8"/><rect x="8.5" y="4" width="6.5" height="11" fill="#dce4ec" stroke="#a8b8c8" stroke-width="0.8"/><path d="M10 6.5H13.5M10 8.5H13.5M10 10.5H13.5M10 12.5H13.5" stroke="#b0c0d8" stroke-width="0.7"/><path d="M0.5 0.8H14L9.5 6V11Q8 12.5 6 11V6Z" fill="url(#gfund)" stroke="#b0b0b0" stroke-width="0.6"/></svg>
<svg style="left:653px;top:298px" width="6" height="4" viewBox="0 0 6 4"><path d="M0 0H5.5L2.75 3.5Z" fill="#9a8040"/></svg>
<svg style="left:664px;top:291px" width="17" height="17" viewBox="0 0 17 17"><path d="M0.5 0.8H14L9.5 6V11Q8 12.5 6 11V6Z" fill="url(#gfund)" stroke="#b0b0b0" stroke-width="0.6"/><path d="M9 8.5L15 14.5M15 8.5L9 14.5" stroke="#b8a4a4" stroke-width="1.8"/></svg>
<div style="left:686px;top:290px;width:1px;height:20px;background:#d9d2b6;"></div>
<svg style="left:694px;top:294px" width="15" height="11" viewBox="0 0 15 11"><path d="M4.2 0.9 H7.2 A4 4 0 0 1 11.2 4.9" fill="none" stroke="#2a8a14" stroke-width="1.3"/><path d="M8.6 5H13.8L11.2 8.8Z" fill="#2a8a14"/><path d="M9.8 9.4 H6.8 A4 4 0 0 1 2.8 5.4" fill="none" stroke="#2a8a14" stroke-width="1.3"/><path d="M0.2 5.4H5.4L2.8 1.8Z" fill="#2a8a14"/></svg>
<div style="left:343px;top:313px;width:542px;height:162px;background:#b0aa85;"></div>
<div style="left:344px;top:314px;width:540px;height:160px;background:#fff;"></div>
<div style="left:344px;top:314px;width:540px;height:20px;background:linear-gradient(#fdfbf3,#f0e9cf);"></div>
<div style="left:344px;top:334px;width:540px;height:1px;background:#d8d0b0;"></div>
<div style="left:344px;top:335px;width:23px;height:18px;background:#6c97cf;"></div>
<div style="left:367px;top:314px;width:1px;height:20px;background:#d8d0b0;"></div>
<div style="left:367px;top:335px;width:1px;height:113px;background:#c9d3df;"></div>
<div style="left:388px;top:314px;width:1px;height:20px;background:#d8d0b0;"></div>
<div style="left:388px;top:335px;width:1px;height:113px;background:#c9d3df;"></div>
<div style="left:478px;top:314px;width:1px;height:20px;background:#d8d0b0;"></div>
<div style="left:478px;top:335px;width:1px;height:113px;background:#c9d3df;"></div>
<div style="left:568px;top:314px;width:1px;height:20px;background:#d8d0b0;"></div>
<div style="left:568px;top:335px;width:1px;height:113px;background:#c9d3df;"></div>
<div style="left:659px;top:314px;width:1px;height:20px;background:#d8d0b0;"></div>
<div style="left:659px;top:335px;width:1px;height:113px;background:#c9d3df;"></div>
<div style="left:714px;top:314px;width:1px;height:20px;background:#d8d0b0;"></div>
<div style="left:714px;top:335px;width:1px;height:113px;background:#c9d3df;"></div>
<div style="left:786px;top:314px;width:1px;height:20px;background:#d8d0b0;"></div>
<div style="left:786px;top:335px;width:1px;height:113px;background:#c9d3df;"></div>
<div style="left:858px;top:314px;width:1px;height:20px;background:#d8d0b0;"></div>
<div style="left:858px;top:335px;width:1px;height:113px;background:#c9d3df;"></div>
<div style="left:344px;top:353px;width:524px;height:1px;background:#c9d3df;"></div>
<div style="left:344px;top:372px;width:524px;height:1px;background:#c9d3df;"></div>
<div style="left:344px;top:391px;width:524px;height:1px;background:#c9d3df;"></div>
<div style="left:344px;top:410px;width:524px;height:1px;background:#c9d3df;"></div>
<div style="left:344px;top:429px;width:524px;height:1px;background:#c9d3df;"></div>
<div style="left:344px;top:448px;width:524px;height:1px;background:#c9d3df;"></div>
<div class="t" style="left:393px;top:314px;font-size:11px;font-weight:normal;color:#333;">Номенклатура</div>
<div class="t" style="left:483px;top:314px;font-size:11px;font-weight:normal;color:#333;">Спецификаци...</div>
<div class="t" style="left:573px;top:314px;font-size:11px;font-weight:normal;color:#333;">Количество ин...</div>
<div class="t" style="left:664px;top:314px;font-size:11px;font-weight:normal;color:#333;">Единица</div>
<div class="t" style="left:719px;top:314px;font-size:11px;font-weight:normal;color:#333;">Коэффици...</div>
<div class="t" style="left:791px;top:314px;font-size:11px;font-weight:normal;color:#333;">Коэффици...</div>
<div class="t" style="left:863px;top:314px;font-size:11px;font-weight:normal;color:#333;">В</div>
<svg style="left:373px;top:317px" width="14" height="14" viewBox="0 0 14 14"><text x="0" y="6.5" font-family="Liberation Sans" font-weight="bold" font-size="7" fill="#7a7a7a">Дт</text><text x="1" y="12.5" font-family="Liberation Sans" font-size="7" fill="#a8a8a8">Кт</text><path d="M8.2 1.2 L12.5 11.5 M12.2 1.5 L8.5 11.5" stroke="#e01010" stroke-width="1.5"/></svg>
<div class="t" style="left:393px;top:335px;font-size:11px;font-weight:normal;color:#000;">Лук</div>
<div class="t" style="left:355px;width:300px;text-align:right;top:335px;font-size:11px;font-weight:normal;color:#000;">8,000</div>
<div class="t" style="left:664px;top:335px;font-size:11px;font-weight:normal;color:#000;">г</div>
<div class="t" style="left:482px;width:300px;text-align:right;top:335px;font-size:11px;font-weight:normal;color:#000;">0,00100000</div>
<div class="t" style="left:554px;width:300px;text-align:right;top:335px;font-size:11px;font-weight:normal;color:#000;">1,00000000</div>
<div style="left:372px;top:338px;width:13px;height:13px;box-sizing:border-box;border:1px solid #a49a76;border-radius:2px;background:#fff"></div>
<svg style="left:348px;top:340px" width="15" height="8" viewBox="0 0 15 8"><rect x="0.5" y="0.5" width="14" height="7" fill="url(#gwave)" stroke="#9aa4b0" stroke-width="0.9"/><path d="M3 5.5 Q4.5 1.5 6 4 Q7.5 6 9 4 L12 3.5" fill="none" stroke="#2a4a68" stroke-width="1.1"/></svg>
<div class="t" style="left:393px;top:354px;font-size:11px;font-weight:normal;color:#000;">Маслины</div>
<div class="t" style="left:355px;width:300px;text-align:right;top:354px;font-size:11px;font-weight:normal;color:#000;">15,000</div>
<div class="t" style="left:664px;top:354px;font-size:11px;font-weight:normal;color:#000;">г</div>
<div class="t" style="left:482px;width:300px;text-align:right;top:354px;font-size:11px;font-weight:normal;color:#000;">0,00100000</div>
<div class="t" style="left:554px;width:300px;text-align:right;top:354px;font-size:11px;font-weight:normal;color:#000;">1,00000000</div>
<div style="left:372px;top:357px;width:13px;height:13px;box-sizing:border-box;border:1px solid #a49a76;border-radius:2px;background:#fff"></div>
<svg style="left:348px;top:359px" width="15" height="8" viewBox="0 0 15 8"><rect x="0.5" y="0.5" width="14" height="7" fill="url(#gwave)" stroke="#9aa4b0" stroke-width="0.9"/><path d="M3 5.5 Q4.5 1.5 6 4 Q7.5 6 9 4 L12 3.5" fill="none" stroke="#2a4a68" stroke-width="1.1"/></svg>
<div class="t" style="left:393px;top:373px;font-size:11px;font-weight:normal;color:#000;">Огурцы свежие</div>
<div class="t" style="left:355px;width:300px;text-align:right;top:373px;font-size:11px;font-weight:normal;color:#000;">14,000</div>
<div class="t" style="left:664px;top:373px;font-size:11px;font-weight:normal;color:#000;">г</div>
<div class="t" style="left:482px;width:300px;text-align:right;top:373px;font-size:11px;font-weight:normal;color:#000;">0,00100000</div>
<div class="t" style="left:554px;width:300px;text-align:right;top:373px;font-size:11px;font-weight:normal;color:#000;">1,00000000</div>
<div style="left:372px;top:376px;width:13px;height:13px;box-sizing:border-box;border:1px solid #a49a76;border-radius:2px;background:#fff"></div>
<svg style="left:348px;top:378px" width="15" height="8" viewBox="0 0 15 8"><rect x="0.5" y="0.5" width="14" height="7" fill="url(#gwave)" stroke="#9aa4b0" stroke-width="0.9"/><path d="M3 5.5 Q4.5 1.5 6 4 Q7.5 6 9 4 L12 3.5" fill="none" stroke="#2a4a68" stroke-width="1.1"/></svg>
<div class="t" style="left:393px;top:392px;font-size:11px;font-weight:normal;color:#000;">Помидоры</div>
<div class="t" style="left:355px;width:300px;text-align:right;top:392px;font-size:11px;font-weight:normal;color:#000;">13,000</div>
<div class="t" style="left:664px;top:392px;font-size:11px;font-weight:normal;color:#000;">г</div>
<div class="t" style="left:482px;width:300px;text-align:right;top:392px;font-size:11px;font-weight:normal;color:#000;">0,00100000</div>
<div class="t" style="left:554px;width:300px;text-align:right;top:392px;font-size:11px;font-weight:normal;color:#000;">1,00000000</div>
<div style="left:372px;top:395px;width:13px;height:13px;box-sizing:border-box;border:1px solid #a49a76;border-radius:2px;background:#fff"></div>
<svg style="left:348px;top:397px" width="15" height="8" viewBox="0 0 15 8"><rect x="0.5" y="0.5" width="14" height="7" fill="url(#gwave)" stroke="#9aa4b0" stroke-width="0.9"/><path d="M3 5.5 Q4.5 1.5 6 4 Q7.5 6 9 4 L12 3.5" fill="none" stroke="#2a4a68" stroke-width="1.1"/></svg>
<div class="t" style="left:393px;top:411px;font-size:11px;font-weight:normal;color:#000;">Масло оливко...</div>
<div class="t" style="left:355px;width:300px;text-align:right;top:411px;font-size:11px;font-weight:normal;color:#000;">0,025</div>
<div class="t" style="left:664px;top:411px;font-size:11px;font-weight:normal;color:#000;">л</div>
<div class="t" style="left:482px;width:300px;text-align:right;top:411px;font-size:11px;font-weight:normal;color:#000;">1,00000000</div>
<div class="t" style="left:554px;width:300px;text-align:right;top:411px;font-size:11px;font-weight:normal;color:#000;">900,00000...</div>
<div style="left:372px;top:414px;width:13px;height:13px;box-sizing:border-box;border:1px solid #a49a76;border-radius:2px;background:#fff"></div>
<svg style="left:348px;top:416px" width="15" height="8" viewBox="0 0 15 8"><rect x="0.5" y="0.5" width="14" height="7" fill="url(#gwave)" stroke="#9aa4b0" stroke-width="0.9"/><path d="M3 5.5 Q4.5 1.5 6 4 Q7.5 6 9 4 L12 3.5" fill="none" stroke="#2a4a68" stroke-width="1.1"/></svg>
<div class="t" style="left:393px;top:430px;font-size:11px;font-weight:normal;color:#000;">Сыр Фета</div>
<div class="t" style="left:355px;width:300px;text-align:right;top:430px;font-size:11px;font-weight:normal;color:#000;">30,000</div>
<div class="t" style="left:664px;top:430px;font-size:11px;font-weight:normal;color:#000;">г</div>
<div class="t" style="left:482px;width:300px;text-align:right;top:430px;font-size:11px;font-weight:normal;color:#000;">0,00100000</div>
<div class="t" style="left:554px;width:300px;text-align:right;top:430px;font-size:11px;font-weight:normal;color:#000;">1,00000000</div>
<div style="left:372px;top:433px;width:13px;height:13px;box-sizing:border-box;border:1px solid #a49a76;border-radius:2px;background:#fff"></div>
<svg style="left:348px;top:435px" width="15" height="8" viewBox="0 0 15 8"><rect x="0.5" y="0.5" width="14" height="7" fill="url(#gwave)" stroke="#9aa4b0" stroke-width="0.9"/><path d="M3 5.5 Q4.5 1.5 6 4 Q7.5 6 9 4 L12 3.5" fill="none" stroke="#2a4a68" stroke-width="1.1"/></svg>
<div style="left:869px;top:314px;width:15px;height:144px;background:#f9f8f3;"></div>
<div style="left:868px;top:313px;width:1px;height:146px;background:#b0aa85;"></div>
<div style="left:869px;top:314px;width:15px;height:20px;background:linear-gradient(90deg,#fcfbf4,#ebe4c8);"></div>
<svg style="left:869px;top:314px" width="15" height="20" viewBox="0 0 15 20"><path d="M3.8 13.2L7.5 6.0L11.2 13.2Z" fill="url(#tri)"/></svg>
<div style="left:868px;top:334px;width:17px;height:1px;background:#b0aa85;"></div>
<div style="left:869px;top:438px;width:15px;height:20px;background:linear-gradient(90deg,#fcfbf4,#ebe4c8);"></div>
<svg style="left:869px;top:438px" width="15" height="20" viewBox="0 0 15 20"><path d="M3.8 6.8L7.5 14.0L11.2 6.8Z" fill="url(#tri)"/></svg>
<div style="left:868px;top:437px;width:17px;height:1px;background:#b0aa85;"></div>
<div style="left:869px;top:379px;width:15px;height:14px;background:linear-gradient(90deg,#faf8ee,#e6dfc0);"></div>
<svg style="left:872px;top:382px" width="8" height="8" viewBox="0 0 8 8"><path d="M5.9 2.7 A2.3 2.3 0 1 0 6.3 5.1" fill="none" stroke="#d2ccb8" stroke-width="1.3"/></svg>
<div style="left:868px;top:378px;width:17px;height:1px;background:#b0aa85;"></div>
<div style="left:868px;top:393px;width:17px;height:1px;background:#b0aa85;"></div>
<div style="left:344px;top:459px;width:524px;height:15px;background:#f9f8f3;"></div>
<div style="left:343px;top:458px;width:542px;height:1px;background:#b0aa85;"></div>
<div style="left:344px;top:459px;width:20px;height:15px;background:linear-gradient(90deg,#fcfbf4,#ebe4c8);"></div>
<svg style="left:344px;top:459px" width="20" height="15" viewBox="0 0 20 15"><path d="M13.0 3.5L6.5 7.5L13.0 11.5Z" fill="url(#trih)"/></svg>
<div style="left:364px;top:459px;width:1px;height:15px;background:#b0aa85;"></div>
<div style="left:365px;top:459px;width:321px;height:15px;background:linear-gradient(#faf8ee,#e9e3c6);"></div>
<div style="left:686px;top:459px;width:1px;height:15px;background:#b0aa85;"></div>
<svg style="left:521px;top:462px" width="8" height="8" viewBox="0 0 8 8"><path d="M5.9 2.7 A2.3 2.3 0 1 0 6.3 5.1" fill="none" stroke="#d2ccb8" stroke-width="1.3"/></svg>
<div style="left:848px;top:459px;width:20px;height:15px;background:linear-gradient(90deg,#fcfbf4,#ebe4c8);"></div>
<svg style="left:848px;top:459px" width="20" height="15" viewBox="0 0 20 15"><path d="M7.0 3.5L13.5 7.5L7.0 11.5Z" fill="url(#trih)"/></svg>
<div style="left:847px;top:459px;width:1px;height:15px;background:#b0aa85;"></div>
<div style="left:869px;top:459px;width:15px;height:15px;background:#f9f8f3;"></div>
<div style="left:868px;top:458px;width:1px;height:17px;background:#b0aa85;"></div>
<div class="t" style="left:343px;top:479px;font-size:12px;font-weight:bold;color:#ad5d08;">Специи</div>
<div style="left:343px;top:496px;width:542px;height:1px;background:#b0aa85;"></div>
<div class="t" style="left:347px;top:499px;font-size:11px;font-weight:normal;color:#222;">Действия</div>
<svg style="left:401px;top:508px" width="5" height="3" viewBox="0 0 5 3"><path d="M0 0H5L2.5 3Z" fill="#333"/></svg>
<div style="left:411px;top:501px;width:1px;height:20px;background:#d9d2b6;"></div>
<svg style="left:418px;top:502px" width="16" height="16" viewBox="0 0 16 16"><circle cx="8.2" cy="8" r="7.3" fill="url(#gpl)" stroke="url(#gplst)" stroke-width="1"/><path d="M6.7 3.9H9.7V6.5H12.3V9.5H9.7V12.1H6.7V9.5H4.1V6.5H6.7Z" fill="#fff" stroke="#4a9a38" stroke-width="0.5"/></svg>
<svg style="left:442px;top:502px" width="17" height="17" viewBox="0 0 17 17"><path d="M0.5 0.5H9L12.5 4V14.5H0.5Z" fill="#f4f8fc" stroke="#7d9ab4"/><path d="M9 0.5V4H12.5" fill="#c8d8e8" stroke="#7d9ab4"/><path d="M2.5 3.5H7.5M2.5 5.5H7.5M2.5 8.5H7M2.5 10.5H6M2.5 12.5H6" stroke="#9aaabc" stroke-width="1"/><circle cx="10.5" cy="10.5" r="4.6" fill="url(#gpl)" stroke="#6f7f6c" stroke-width="0.9"/><path d="M7.8 10.5H13.2M10.5 7.8V13.2" stroke="#fff" stroke-width="2"/></svg>
<svg style="left:463px;top:500px" width="16" height="16" viewBox="0 0 16 16"><path d="M3 16 L5 10 L10.5 4.2 L14.8 8.4 L9 14Z" fill="url(#gpen)" stroke="#2a7a12" stroke-width="0.6"/><path d="M9.1 5.6L13.4 9.8" stroke="#2a7a12" stroke-width="0.8"/><path d="M3.4 15.6 L5 10.8 L8.6 14.2Z" fill="#eefde8"/><path d="M3 16 L3.9 13.3 L5.7 15.1Z" fill="#1c5a0c"/></svg>
<svg style="left:489px;top:505px" width="12" height="12" viewBox="0 0 12 12"><path d="M1.5 1.5L10.5 10.5M10.5 1.5L1.5 10.5" stroke="#e06060" stroke-width="2.6" stroke-linecap="round"/><path d="M1.5 1.5L10.5 10.5M10.5 1.5L1.5 10.5" stroke="#f4a8a0" stroke-width="0.8"/></svg>
<svg style="left:510px;top:502px" width="16" height="16" viewBox="0 0 16 16"><rect x="0.5" y="0.5" width="14" height="14" rx="1" fill="#b4c6d6" stroke="#a4b8ca"/><rect x="3" y="1.5" width="9" height="5" fill="#dde6ee" stroke="#c0ccd8" stroke-width="0.8"/><rect x="4" y="3" width="7" height="2" fill="#b8ccd8"/><rect x="4" y="9" width="11" height="6" fill="#e8edf2"/><text x="4.6" y="15" font-family="Liberation Sans" font-weight="bold" font-size="7" fill="#8aa0b4">OK</text></svg>
<div style="left:531px;top:501px;width:1px;height:20px;background:#d9d2b6;"></div>
<svg style="left:538px;top:501px" width="17" height="18" viewBox="0 0 17 18"><path d="M1.5 5.5H12V16.5H1.5Z" fill="#f4f8fc" stroke="#4a6a90" stroke-width="1"/><path d="M3 8.5H4.5M3 10.5H4.5M3 12.5H4.5" stroke="#8a9cb8"/><path d="M0.3 2H14.7L9.9 7.6V13.2Q8 15.6 6.1 13.2V7.6Z" fill="url(#gfun)" stroke="#7a7a7a" stroke-width="0.7"/><path d="M0.3 1.9H14.7" stroke="#5a5a5a" stroke-width="1.2"/><path d="M14.5 8.5V15" stroke="#22384e" stroke-width="1.2"/><path d="M12.1 14H16.9L14.5 17.6Z" fill="#22384e"/><path d="M14 3L15.2 4.2L14 5.4L15.2 6.6L14 7.8" stroke="#3a5878" stroke-width="0.9" fill="none"/></svg>
<svg style="left:561px;top:502px" width="16" height="17" viewBox="0 0 16 17"><path d="M0.5 0.8H14L9.5 6V11Q8 12.5 6 11V6Z" fill="url(#gfund)" stroke="#b0b0b0" stroke-width="0.6"/><rect x="7.5" y="5.5" width="7.5" height="10" fill="#dde4ea" stroke="#b4c4d2" stroke-width="0.8"/><path d="M9 12L10.5 13.5L13.5 9.5" stroke="#8ab0d0" stroke-width="1.2" fill="none"/></svg>
<svg style="left:584px;top:502px" width="16" height="17" viewBox="0 0 16 17"><rect x="0.5" y="4" width="6" height="11" fill="#e2e6e6" stroke="#c8cccc" stroke-width="0.8"/><rect x="8.5" y="4" width="6.5" height="11" fill="#dce4ec" stroke="#a8b8c8" stroke-width="0.8"/><path d="M10 6.5H13.5M10 8.5H13.5M10 10.5H13.5M10 12.5H13.5" stroke="#b0c0d8" stroke-width="0.7"/><path d="M0.5 0.8H14L9.5 6V11Q8 12.5 6 11V6Z" fill="url(#gfund)" stroke="#b0b0b0" stroke-width="0.6"/></svg>
<svg style="left:603px;top:509px" width="6" height="4" viewBox="0 0 6 4"><path d="M0 0H5.5L2.75 3.5Z" fill="#9a8040"/></svg>
<svg style="left:614px;top:502px" width="17" height="17" viewBox="0 0 17 17"><path d="M0.5 0.8H14L9.5 6V11Q8 12.5 6 11V6Z" fill="url(#gfund)" stroke="#b0b0b0" stroke-width="0.6"/><path d="M9 8.5L15 14.5M15 8.5L9 14.5" stroke="#b8a4a4" stroke-width="1.8"/></svg>
<div style="left:635px;top:501px;width:1px;height:20px;background:#d9d2b6;"></div>
<svg style="left:643px;top:505px" width="15" height="11" viewBox="0 0 15 11"><path d="M4.2 0.9 H7.2 A4 4 0 0 1 11.2 4.9" fill="none" stroke="#2a8a14" stroke-width="1.3"/><path d="M8.6 5H13.8L11.2 8.8Z" fill="#2a8a14"/><path d="M9.8 9.4 H6.8 A4 4 0 0 1 2.8 5.4" fill="none" stroke="#2a8a14" stroke-width="1.3"/><path d="M0.2 5.4H5.4L2.8 1.8Z" fill="#2a8a14"/></svg>
<div style="left:343px;top:524px;width:542px;height:144px;background:#b0aa85;"></div>
<div style="left:344px;top:525px;width:540px;height:142px;background:#fff;"></div>
<div style="left:344px;top:525px;width:540px;height:20px;background:linear-gradient(#fdfbf3,#f0e9cf);"></div>
<div style="left:344px;top:545px;width:540px;height:1px;background:#d8d0b0;"></div>
<div style="left:344px;top:546px;width:23px;height:18px;background:#6c97cf;"></div>
<div style="left:367px;top:525px;width:1px;height:20px;background:#d8d0b0;"></div>
<div style="left:367px;top:546px;width:1px;height:56px;background:#c9d3df;"></div>
<div style="left:476px;top:525px;width:1px;height:20px;background:#d8d0b0;"></div>
<div style="left:476px;top:546px;width:1px;height:56px;background:#c9d3df;"></div>
<div style="left:585px;top:525px;width:1px;height:20px;background:#d8d0b0;"></div>
<div style="left:585px;top:546px;width:1px;height:56px;background:#c9d3df;"></div>
<div style="left:634px;top:525px;width:1px;height:20px;background:#d8d0b0;"></div>
<div style="left:634px;top:546px;width:1px;height:56px;background:#c9d3df;"></div>
<div style="left:743px;top:525px;width:1px;height:20px;background:#d8d0b0;"></div>
<div style="left:743px;top:546px;width:1px;height:56px;background:#c9d3df;"></div>
<div style="left:798px;top:525px;width:1px;height:20px;background:#d8d0b0;"></div>
<div style="left:798px;top:546px;width:1px;height:56px;background:#c9d3df;"></div>
<div style="left:344px;top:564px;width:524px;height:1px;background:#c9d3df;"></div>
<div style="left:344px;top:583px;width:524px;height:1px;background:#c9d3df;"></div>
<div style="left:344px;top:602px;width:524px;height:1px;background:#c9d3df;"></div>
<div class="t" style="left:372px;top:525px;font-size:11px;font-weight:normal;color:#333;">Номенклатура</div>
<div class="t" style="left:481px;top:525px;font-size:11px;font-weight:normal;color:#333;">Количество проду...</div>
<div class="t" style="left:590px;top:525px;font-size:11px;font-weight:normal;color:#333;">Едини...</div>
<div class="t" style="left:639px;top:525px;font-size:11px;font-weight:normal;color:#333;">Расход специи</div>
<div class="t" style="left:748px;top:525px;font-size:11px;font-weight:normal;color:#333;">Единиц...</div>
<div class="t" style="left:803px;top:525px;font-size:11px;font-weight:normal;color:#333;">Коэффиц...</div>
<div class="t" style="left:372px;top:546px;font-size:11px;font-weight:normal;color:#000;">Лимон</div>
<div class="t" style="left:281px;width:300px;text-align:right;top:546px;font-size:11px;font-weight:normal;color:#000;">200,000</div>
<div class="t" style="left:590px;top:546px;font-size:11px;font-weight:normal;color:#000;">порция</div>
<div class="t" style="left:439px;width:300px;text-align:right;top:546px;font-size:11px;font-weight:normal;color:#000;">1,000</div>
<div class="t" style="left:748px;top:546px;font-size:11px;font-weight:normal;color:#000;">г</div>
<div class="t" style="left:564px;width:300px;text-align:right;top:546px;font-size:11px;font-weight:normal;color:#000;">0,00100000</div>
<svg style="left:348px;top:551px" width="15" height="8" viewBox="0 0 15 8"><rect x="0.5" y="0.5" width="14" height="7" fill="url(#gwave)" stroke="#9aa4b0" stroke-width="0.9"/><path d="M3 5.5 Q4.5 1.5 6 4 Q7.5 6 9 4 L12 3.5" fill="none" stroke="#2a4a68" stroke-width="1.1"/></svg>
<div class="t" style="left:372px;top:565px;font-size:11px;font-weight:normal;color:#000;">Лист салата</div>
<div class="t" style="left:281px;width:300px;text-align:right;top:565px;font-size:11px;font-weight:normal;color:#000;">200,000</div>
<div class="t" style="left:590px;top:565px;font-size:11px;font-weight:normal;color:#000;">порция</div>
<div class="t" style="left:439px;width:300px;text-align:right;top:565px;font-size:11px;font-weight:normal;color:#000;">1,200</div>
<div class="t" style="left:748px;top:565px;font-size:11px;font-weight:normal;color:#000;">г</div>
<div class="t" style="left:564px;width:300px;text-align:right;top:565px;font-size:11px;font-weight:normal;color:#000;">0,00100000</div>
<svg style="left:348px;top:570px" width="15" height="8" viewBox="0 0 15 8"><rect x="0.5" y="0.5" width="14" height="7" fill="url(#gwave)" stroke="#9aa4b0" stroke-width="0.9"/><path d="M3 5.5 Q4.5 1.5 6 4 Q7.5 6 9 4 L12 3.5" fill="none" stroke="#2a4a68" stroke-width="1.1"/></svg>
<div class="t" style="left:372px;top:584px;font-size:11px;font-weight:normal;color:#000;">Перец черный мо...</div>
<div class="t" style="left:281px;width:300px;text-align:right;top:584px;font-size:11px;font-weight:normal;color:#000;">200,000</div>
<div class="t" style="left:590px;top:584px;font-size:11px;font-weight:normal;color:#000;">порция</div>
<div class="t" style="left:439px;width:300px;text-align:right;top:584px;font-size:11px;font-weight:normal;color:#000;">0,200</div>
<div class="t" style="left:748px;top:584px;font-size:11px;font-weight:normal;color:#000;">г</div>
<div class="t" style="left:564px;width:300px;text-align:right;top:584px;font-size:11px;font-weight:normal;color:#000;">0,00100000</div>
<svg style="left:348px;top:589px" width="15" height="8" viewBox="0 0 15 8"><rect x="0.5" y="0.5" width="14" height="7" fill="url(#gwave)" stroke="#9aa4b0" stroke-width="0.9"/><path d="M3 5.5 Q4.5 1.5 6 4 Q7.5 6 9 4 L12 3.5" fill="none" stroke="#2a4a68" stroke-width="1.1"/></svg>
<div style="left:869px;top:525px;width:15px;height:142px;background:#f9f8f3;"></div>
<div style="left:868px;top:524px;width:1px;height:144px;background:#b0aa85;"></div>
<div style="left:869px;top:525px;width:15px;height:20px;background:linear-gradient(90deg,#fcfbf4,#ebe4c8);"></div>
<svg style="left:869px;top:525px" width="15" height="20" viewBox="0 0 15 20"><path d="M3.8 13.2L7.5 6.0L11.2 13.2Z" fill="url(#tri)"/></svg>
<div style="left:868px;top:545px;width:17px;height:1px;background:#b0aa85;"></div>
<div style="left:869px;top:647px;width:15px;height:20px;background:linear-gradient(90deg,#fcfbf4,#ebe4c8);"></div>
<svg style="left:869px;top:647px" width="15" height="20" viewBox="0 0 15 20"><path d="M3.8 6.8L7.5 14.0L11.2 6.8Z" fill="url(#tri)"/></svg>
<div style="left:868px;top:646px;width:17px;height:1px;background:#b0aa85;"></div>
<div style="left:869px;top:589px;width:15px;height:14px;background:linear-gradient(90deg,#faf8ee,#e6dfc0);"></div>
<svg style="left:872px;top:592px" width="8" height="8" viewBox="0 0 8 8"><path d="M5.9 2.7 A2.3 2.3 0 1 0 6.3 5.1" fill="none" stroke="#d2ccb8" stroke-width="1.3"/></svg>
<div style="left:868px;top:588px;width:17px;height:1px;background:#b0aa85;"></div>
<div style="left:868px;top:603px;width:17px;height:1px;background:#b0aa85;"></div>
</body></html>
